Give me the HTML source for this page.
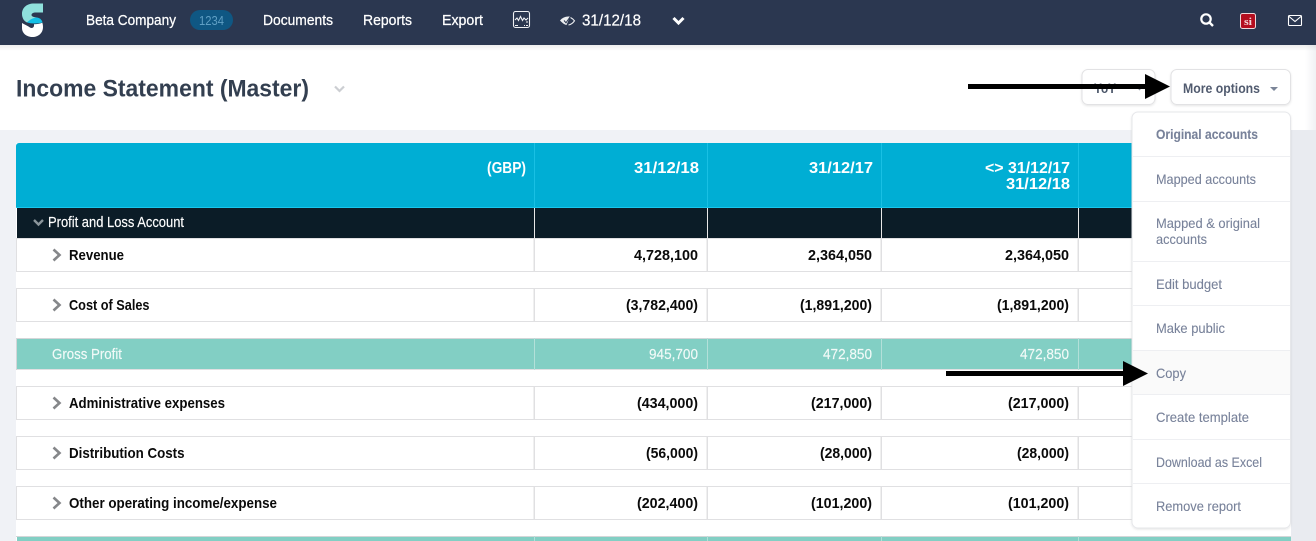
<!DOCTYPE html>
<html lang="en"><head><meta charset="utf-8"><title>Income Statement (Master)</title>
<style>
html,body{margin:0;padding:0;width:1316px;height:541px;overflow:hidden;background:#fff}
svg{display:block}
text{font-family:"Liberation Sans",sans-serif;white-space:pre}
.n{font-size:14.5px;fill:#fff;stroke:#fff;stroke-width:.25px}
.r{font-size:15px;font-weight:700;fill:#0a0a0a}
.h{font-size:16px;font-weight:700;fill:#fff}
.g{font-size:14.5px;fill:#f2faf8;stroke:#f2faf8;stroke-width:.15px}
.d{font-size:14px;fill:#78829a;stroke:#78829a;stroke-width:.1px}
</style></head><body>
<svg width="1316" height="541" viewBox="0 0 1316 541" xmlns="http://www.w3.org/2000/svg">
<defs>
<linearGradient id="sh" x1="0" y1="0" x2="0" y2="1"><stop offset="0" stop-color="#000" stop-opacity=".07"/><stop offset="1" stop-color="#000" stop-opacity="0"/></linearGradient>
<linearGradient id="sr" x1="0" y1="0" x2="1" y2="0"><stop offset="0" stop-color="#fff"/><stop offset="1" stop-color="#f0f1f4"/></linearGradient>
<filter id="ds" x="-10%" y="-10%" width="120%" height="120%"><feDropShadow dx="0" dy="1" stdDeviation="1" flood-color="#000" flood-opacity=".1"/></filter>
</defs>
<!-- page -->
<rect width="1316" height="541" fill="#fff"/>
<rect x="1305" y="45" width="11" height="85" fill="url(#sr)"/>
<rect y="130" width="1316" height="411" fill="#f0f2f6"/>
<rect x="1291" y="130" width="25" height="411" fill="#e9ebf0"/>
<!-- nav -->
<rect width="1316" height="45" fill="#2b3750"/>
<rect y="45" width="1316" height="6" fill="url(#sh)"/>
<path d="M43 3.500V12.500H36C33 12.500 31.500 13.500 31.500 15C31.500 16.500 34 17.200 37 17.500L27 22.500C24 21 22 18 22 14C22 7.500 27 3.500 34 3.500Z" fill="#8fe0dc"/>
<path d="M27 22.500C30 19.500 33 17.800 37 17.500C40 18 42 20 42.500 22.500C38 23.800 31 23.800 27 22.500Z" fill="#14c0e6"/>
<path d="M22 23C24.500 24.500 28 26 30 27.500C31.500 28.500 33.500 28 34 26L34 24.200C37 24.200 40 23.800 42.300 22.800C42.800 24 43 25.500 43 27C43 33 38.500 37 32.500 37C27 37 22 33.500 22 28Z" fill="#fff"/>
<text class="n" x="86" y="25" textLength="90" lengthAdjust="spacingAndGlyphs">Beta Company</text>
<rect x="190" y="10" width="43" height="20" rx="10" fill="#0f5783"/>
<text x="199" y="25" font-size="13" fill="#5f9fc4" textLength="25" lengthAdjust="spacingAndGlyphs">1234</text>
<text class="n" x="263" y="25" textLength="70" lengthAdjust="spacingAndGlyphs">Documents</text>
<text class="n" x="363" y="25" textLength="49" lengthAdjust="spacingAndGlyphs">Reports</text>
<text class="n" x="442" y="25" textLength="41" lengthAdjust="spacingAndGlyphs">Export</text>
<rect x="513.500" y="11.500" width="16" height="16" rx="2" fill="none" stroke="#f0f1f4" stroke-width="1.100"/>
<path d="M515 20L517 18L518.500 20.500L520.500 16.500L522.500 20.500L524 18L526 20L528 18" fill="none" stroke="#f0f1f4" stroke-width="1.100"/>
<path d="M515 25.500h3M524 25.500h1M526 25.500h2M526 22h2" stroke="#f0f1f4" stroke-width="1.100"/>
<path d="M560 20.500C562.500 17.500 566.500 16 570 16.700L566.500 25C564 24.500 562 22.500 560 20.500Z" fill="#eceef1"/>
<path d="M570.500 17.500C572 18.300 573.500 19.500 574.500 20.800C573 23 571 24.500 568.500 25" fill="none" stroke="#eceef1" stroke-width="1.100"/>
<path d="M564 20.500L566 22.800L570 17" fill="none" stroke="#2b3750" stroke-width="1"/>
<text x="582" y="25.500" font-size="15.500" fill="#fff" stroke="#fff" stroke-width=".2" textLength="59" lengthAdjust="spacingAndGlyphs">31/12/18</text>
<path d="M673.500 18L678.500 23L683.500 18" fill="none" stroke="#fff" stroke-width="3"/>
<circle cx="1206" cy="19" r="4.700" fill="none" stroke="#fff" stroke-width="2.200"/>
<path d="M1209.500 22.500L1213 26" stroke="#fff" stroke-width="2.400"/>
<rect x="1240.500" y="13.500" width="15" height="15" rx="2" fill="#b40d1e" stroke="#f0d8da" stroke-width="1"/>
<text x="1244" y="25" font-size="10" font-weight="700" fill="#f3d6d8" style="font-family:'Liberation Serif',serif" textLength="8" lengthAdjust="spacingAndGlyphs">si</text>
<rect x="1288.500" y="15.500" width="13" height="10" rx="1" fill="none" stroke="#fff" stroke-width="1.100"/>
<path d="M1288.500 16L1295 21.500L1301.500 16" fill="none" stroke="#fff" stroke-width="1.100"/>
<!-- title -->
<text x="16" y="96.500" font-size="24" font-weight="700" fill="#333f50" textLength="293" lengthAdjust="spacingAndGlyphs">Income Statement (Master)</text>
<path d="M335 86.500L339.500 91L344 86.500" fill="none" stroke="#ccced2" stroke-width="2.200"/>
<!-- buttons -->
<rect x="1082" y="69.500" width="73" height="35" rx="6" fill="#fff" stroke="#e2e2e4" filter="url(#ds)"/>
<text x="1094" y="93" font-size="13.500" font-weight="700" fill="#4a5568" textLength="22" lengthAdjust="spacingAndGlyphs">YoY</text>
<path d="M1136 86.500h7l-3.500 4z" fill="#8a92a0"/>
<rect x="1171" y="69.500" width="119.500" height="35" rx="6" fill="#fff" stroke="#e2e2e4" filter="url(#ds)"/>
<text x="1183" y="93" font-size="14" font-weight="700" fill="#515b6f" textLength="77" lengthAdjust="spacingAndGlyphs">More options</text>
<path d="M1270 87h8l-4 4z" fill="#7b8598"/>
<!-- table -->
<rect x="16" y="143" width="1275" height="398" fill="#fff"/>
<path d="M16 146a3 3 0 0 1 3-3H1291V207H16Z" fill="#00aed4"/>
<rect x="16" y="207" width="1275" height="1" fill="#19c6ec"/>
<rect x="534" y="143" width="1" height="65" fill="#19c0e4"/><rect x="707" y="143" width="1" height="65" fill="#19c0e4"/><rect x="881" y="143" width="1" height="65" fill="#19c0e4"/><rect x="1078" y="143" width="1" height="65" fill="#19c0e4"/>
<text class="h" x="487" y="173" textLength="39" lengthAdjust="spacingAndGlyphs">(GBP)</text>
<text class="h" x="634" y="173" textLength="65" lengthAdjust="spacingAndGlyphs">31/12/18</text>
<text class="h" x="809" y="173" textLength="64" lengthAdjust="spacingAndGlyphs">31/12/17</text>
<text class="h" x="985" y="173" textLength="85" lengthAdjust="spacingAndGlyphs">&lt;&gt; 31/12/17</text>
<text class="h" x="1006" y="189" textLength="64" lengthAdjust="spacingAndGlyphs">31/12/18</text>
<!-- dark row -->
<rect x="17" y="208" width="1274" height="30" fill="#0b1c27"/>
<rect x="534" y="208" width="1" height="30" fill="#e8e8e8"/><rect x="707" y="208" width="1" height="30" fill="#e8e8e8"/><rect x="881" y="208" width="1" height="30" fill="#e8e8e8"/><rect x="1078" y="208" width="1" height="30" fill="#e8e8e8"/>
<path d="M34 220L38.500 224.500L43 220" fill="none" stroke="#8b959b" stroke-width="2.400"/>
<text x="48" y="227" font-size="14.500" fill="#fff" stroke="#fff" stroke-width=".15" textLength="136" lengthAdjust="spacingAndGlyphs">Profit and Loss Account</text>
<!-- row borders -->
<g fill="#e0e0e2">
<rect x="16" y="238" width="1275" height="1"/><rect x="16" y="271" width="1275" height="1"/>
<rect x="16" y="288" width="1275" height="1"/><rect x="16" y="321" width="1275" height="1"/>
<rect x="16" y="386" width="1275" height="1"/><rect x="16" y="419" width="1275" height="1"/>
<rect x="16" y="436" width="1275" height="1"/><rect x="16" y="469" width="1275" height="1"/>
<rect x="16" y="486" width="1275" height="1"/><rect x="16" y="519" width="1275" height="1"/>
<rect x="16" y="238" width="1" height="34"/><rect x="16" y="288" width="1" height="34"/><rect x="16" y="386" width="1" height="34"/><rect x="16" y="436" width="1" height="34"/><rect x="16" y="486" width="1" height="34"/>
<rect x="533.500" y="238" width="1.500" height="34"/><rect x="706.500" y="238" width="1.500" height="34"/><rect x="880.500" y="238" width="1.500" height="34"/><rect x="1077.500" y="238" width="1.500" height="34"/>
<rect x="533.500" y="288" width="1.500" height="34"/><rect x="706.500" y="288" width="1.500" height="34"/><rect x="880.500" y="288" width="1.500" height="34"/><rect x="1077.500" y="288" width="1.500" height="34"/>
<rect x="533.500" y="386" width="1.500" height="34"/><rect x="706.500" y="386" width="1.500" height="34"/><rect x="880.500" y="386" width="1.500" height="34"/><rect x="1077.500" y="386" width="1.500" height="34"/>
<rect x="533.500" y="436" width="1.500" height="34"/><rect x="706.500" y="436" width="1.500" height="34"/><rect x="880.500" y="436" width="1.500" height="34"/><rect x="1077.500" y="436" width="1.500" height="34"/>
<rect x="533.500" y="486" width="1.500" height="34"/><rect x="706.500" y="486" width="1.500" height="34"/><rect x="880.500" y="486" width="1.500" height="34"/><rect x="1077.500" y="486" width="1.500" height="34"/>
</g>
<!-- green rows -->
<rect x="16" y="338" width="1275" height="1" fill="#d4d6d8"/>
<rect x="17" y="339" width="1274" height="30" fill="#82cfc4"/>
<rect x="16" y="369" width="1275" height="1" fill="#e0e0e2"/>
<rect x="16" y="339" width="1" height="31" fill="#d4d6d8"/>
<g fill="#b3e0d9"><rect x="534" y="338" width="1" height="32"/><rect x="707" y="338" width="1" height="32"/><rect x="881" y="338" width="1" height="32"/><rect x="1078" y="338" width="1" height="32"/></g>
<rect x="16" y="536" width="1275" height="1" fill="#d4d6d8"/>
<rect x="17" y="537" width="1274" height="4" fill="#82cfc4"/>
<g fill="#b3e0d9"><rect x="534" y="536" width="1" height="5"/><rect x="707" y="536" width="1" height="5"/><rect x="881" y="536" width="1" height="5"/><rect x="1078" y="536" width="1" height="5"/></g>
<!-- row chevrons -->
<g fill="none" stroke="#85878a" stroke-width="2.600">
<path d="M53.500 249.500L59.500 255L53.500 260.500"/><path d="M53.500 299.500L59.500 305L53.500 310.500"/><path d="M53.500 397.500L59.500 403L53.500 408.500"/><path d="M53.500 447.500L59.500 453L53.500 458.500"/><path d="M53.500 497.500L59.500 503L53.500 508.500"/>
</g>
<!-- labels -->
<text class="r" x="69" y="260" textLength="55" lengthAdjust="spacingAndGlyphs">Revenue</text>
<text class="r" x="69" y="310" textLength="80.500" lengthAdjust="spacingAndGlyphs">Cost of Sales</text>
<text class="g" x="52" y="359" textLength="70" lengthAdjust="spacingAndGlyphs">Gross Profit</text>
<text class="r" x="69" y="408" textLength="156" lengthAdjust="spacingAndGlyphs">Administrative expenses</text>
<text class="r" x="69" y="458" textLength="115.500" lengthAdjust="spacingAndGlyphs">Distribution Costs</text>
<text class="r" x="69" y="508" textLength="208" lengthAdjust="spacingAndGlyphs">Other operating income/expense</text>
<!-- numbers -->
<text class="r" x="634" y="260" textLength="64" lengthAdjust="spacingAndGlyphs">4,728,100</text>
<text class="r" x="808" y="260" textLength="64" lengthAdjust="spacingAndGlyphs">2,364,050</text>
<text class="r" x="1005" y="260" textLength="64" lengthAdjust="spacingAndGlyphs">2,364,050</text>
<text class="r" x="626" y="310" textLength="72" lengthAdjust="spacingAndGlyphs">(3,782,400)</text>
<text class="r" x="800" y="310" textLength="72" lengthAdjust="spacingAndGlyphs">(1,891,200)</text>
<text class="r" x="997" y="310" textLength="72" lengthAdjust="spacingAndGlyphs">(1,891,200)</text>
<text class="g" x="649" y="359" textLength="49" lengthAdjust="spacingAndGlyphs">945,700</text>
<text class="g" x="823" y="359" textLength="49" lengthAdjust="spacingAndGlyphs">472,850</text>
<text class="g" x="1020" y="359" textLength="49" lengthAdjust="spacingAndGlyphs">472,850</text>
<text class="r" x="637" y="408" textLength="61" lengthAdjust="spacingAndGlyphs">(434,000)</text>
<text class="r" x="811" y="408" textLength="61" lengthAdjust="spacingAndGlyphs">(217,000)</text>
<text class="r" x="1008" y="408" textLength="61" lengthAdjust="spacingAndGlyphs">(217,000)</text>
<text class="r" x="646" y="458" textLength="52" lengthAdjust="spacingAndGlyphs">(56,000)</text>
<text class="r" x="820" y="458" textLength="52" lengthAdjust="spacingAndGlyphs">(28,000)</text>
<text class="r" x="1017" y="458" textLength="52" lengthAdjust="spacingAndGlyphs">(28,000)</text>
<text class="r" x="637" y="508" textLength="61" lengthAdjust="spacingAndGlyphs">(202,400)</text>
<text class="r" x="811" y="508" textLength="61" lengthAdjust="spacingAndGlyphs">(101,200)</text>
<text class="r" x="1008" y="508" textLength="61" lengthAdjust="spacingAndGlyphs">(101,200)</text>
<!-- dropdown -->
<rect x="1132" y="112" width="158.500" height="416" rx="6" fill="#fff" stroke="#e6e7ea" filter="url(#ds)"/>
<rect x="1133" y="351" width="157" height="43" fill="#fafafa"/>
<g fill="#eeeff2">
<rect x="1133" y="156" width="157" height="1"/><rect x="1133" y="201" width="157" height="1"/><rect x="1133" y="261" width="157" height="1"/><rect x="1133" y="305" width="157" height="1"/><rect x="1133" y="350" width="157" height="1"/><rect x="1133" y="394" width="157" height="1"/><rect x="1133" y="439" width="157" height="1"/><rect x="1133" y="483" width="157" height="1"/>
</g>
<text class="d" x="1156" y="139" font-weight="700" textLength="102" lengthAdjust="spacingAndGlyphs">Original accounts</text>
<text class="d" x="1156" y="184" textLength="100" lengthAdjust="spacingAndGlyphs">Mapped accounts</text>
<text class="d" x="1156" y="228" textLength="104" lengthAdjust="spacingAndGlyphs">Mapped &amp; original</text>
<text class="d" x="1156" y="244" textLength="51" lengthAdjust="spacingAndGlyphs">accounts</text>
<text class="d" x="1156" y="289" textLength="66" lengthAdjust="spacingAndGlyphs">Edit budget</text>
<text class="d" x="1156" y="333" textLength="69" lengthAdjust="spacingAndGlyphs">Make public</text>
<text class="d" x="1156" y="378" textLength="30" lengthAdjust="spacingAndGlyphs">Copy</text>
<text class="d" x="1156" y="422" textLength="93" lengthAdjust="spacingAndGlyphs">Create template</text>
<text class="d" x="1156" y="467" textLength="106" lengthAdjust="spacingAndGlyphs">Download as Excel</text>
<text class="d" x="1156" y="511" textLength="85" lengthAdjust="spacingAndGlyphs">Remove report</text>
<!-- arrows -->
<rect x="968" y="84" width="178" height="5" fill="#000"/>
<path d="M1145 74L1170 86.500L1145 99Z" fill="#000"/>
<rect x="946" y="371" width="178" height="5" fill="#000"/>
<path d="M1123 361L1148 373.500L1123 386Z" fill="#000"/>
</svg>
</body></html>
